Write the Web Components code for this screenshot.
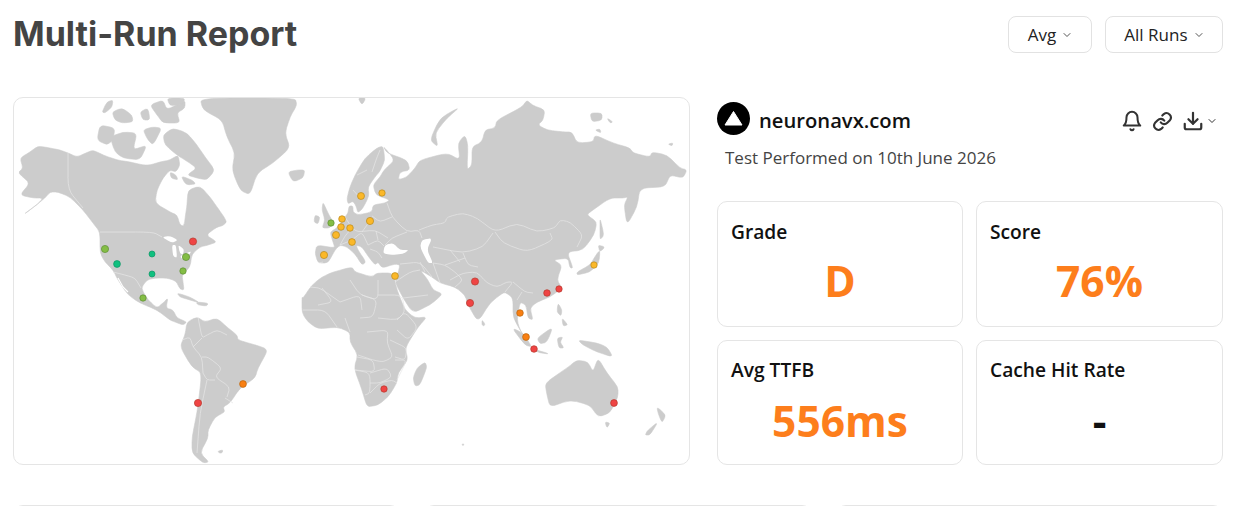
<!DOCTYPE html>
<html>
<head>
<meta charset="utf-8">
<title>Multi-Run Report</title>
<style>
html, body { margin: 0; height: 506px; overflow: hidden; background: #fff; }
body { font-family: "Open Sans", "Noto Sans", "Liberation Sans", sans-serif; color: #111; }
</style>
</head>
<body>
<report-page></report-page>
<script>
const chevron = `<svg width="10" height="10" viewBox="0 0 10 10" fill="none" stroke="currentColor" stroke-width="1" stroke-linecap="round" stroke-linejoin="round"><path d="M2 3.5 5 6.5 8 3.5"/></svg>`;

customElements.define('report-select', class ReportSelect extends HTMLElement {
  constructor() {
    super();
    this.attachShadow({ mode: 'open' });
    this.shadowRoot.innerHTML = `
<style>
:host {
  display: inline-flex;
  align-items: center;
  justify-content: center;
  gap: 6px;
  height: 35px;
  padding: 0 18.5px;
  border: 1px solid #e2e2e2;
  border-radius: 8px;
  font-size: 17px;
  color: #222;
}
svg { display: block; color: #555; }
</style>
<slot></slot>${chevron}`;
  }
});

customElements.define('report-header', class ReportHeader extends HTMLElement {
  constructor() {
    super();
    this.attachShadow({ mode: 'open' });
    this.shadowRoot.innerHTML = `
<style>
:host {
  display: flex;
  align-items: flex-start;
  justify-content: space-between;
  height: 81px;
  padding: 16px 12px 0 13px;
}
h1 {
  margin: 0;
  font: 700 34px/36px Inter, Roboto, sans-serif;
  color: #444;
}
.actions { display: flex; gap: 13px; }
</style>
<h1><slot name="title"></slot></h1>
<div class="actions"><slot></slot></div>`;
  }
});

// land outlines, traced in page coordinates of the reference
const LAND = [
  // north america
  '20,158 30,152 38,146 50,148 60,150 68,153 77,157 86,153 93,150 103,155 117,160 130,162 143,165 150,165 160,162 170,160 178,155 180,165 176,172 170,170 163,178 157,190 155,203 170,212 177,215 180,225 184,226 186,212 187,205 188,190 200,186 210,197 217,207 222,214 227,222 222,226 217,227 206,235 217,242 208,245 200,247 192,254 190,267 182,275 183,282 184,290 180,289 176,281 167,278 155,278 147,280 141,288 148,300 157,308 163,303 168,298 166,308 173,310 177,318 187,322 183,325 175,322 170,320 157,310 140,303 128,295 118,280 113,270 105,262 100,253 100,232 93,223 83,210 70,197 58,192 50,192 45,198 35,206 23,215 38,204 43,198 33,198 20,195 30,183 18,173 23,168',
  // greenland, iceland
  '200,98 295,98 297,105 290,117 285,133 290,148 273,163 257,173 250,195 240,190 232,170 235,153 227,137 222,120 203,110',
  '288,172 297,170 305,170 303,178 293,182',
  // arctic islands
  '163,135 173,128 187,133 197,145 205,157 215,170 207,180 197,178 187,175 197,168 185,160 177,155 165,145',
  '100,125 115,128 113,140 107,145 97,140',
  '110,137 123,132 137,133 133,150 147,145 140,160 123,158 115,152',
  '143,130 152,127 162,128 153,145 148,140',
  '150,105 163,100 167,110 185,100 185,108 177,113 180,123 163,123 157,115',
  '167,98 185,98 183,104 170,106',
  '112,112 122,108 132,115 133,122 122,123 115,120',
  '140,112 148,108 150,120 143,120',
  '102,112 107,102 113,100 112,107 105,113',
  '170,172 176,175 178,180 171,178',
  '181,176 192,180 196,184 186,185',
  // eurasia
  '383,146 387,153 407,160 410,170 400,172 398,180 407,177 415,168 420,160 447,153 460,160 458,143 465,135 468,145 467,170 472,165 472,147 482,142 485,130 495,128 497,120 522,107 527,100 532,105 545,110 543,120 538,125 547,130 563,132 572,132 577,143 593,142 595,135 613,143 630,148 633,153 650,157 652,152 667,155 680,168 687,170 683,178 670,175 665,187 640,188 637,207 627,225 624,205 628,197 623,198 610,198 590,212 587,215 597,222 594,235 583,250 567,252 573,268 570,268 568,258 553,260 562,265 557,280 562,288 550,297 537,302 530,308 533,320 528,318 526,305 520,302 517,320 520,330 528,342 525,338 513,318 513,298 505,292 500,295 490,303 478,322 468,305 465,295 455,287 440,283 432,277 420,270 428,280 433,290 443,294 430,305 413,313 403,298 395,282 398,273 400,265 395,264 382,268 378,262 375,265 368,256 362,247 356,245 358,250 366,262 362,265 355,254 347,247 340,245 335,250 328,263 318,263 315,253 317,245 335,248 333,242 330,232 337,228 345,217 348,213 349,206 353,206 353,212 358,215 372,212 373,205 385,203 390,200 376,195 373,185 380,177 384,170 395,160',
  // scandinavia
  '383,146 377,148 365,158 355,175 350,187 347,198 348,204 353,201 356,206 358,213 363,208 369,196 368,187 375,177 380,171 385,160',
  // africa
  '303,298 312,285 322,277 333,272 352,267 355,272 372,277 377,273 393,273 397,290 405,310 415,318 427,317 418,327 405,348 408,360 398,373 397,383 388,397 378,405 367,407 362,390 354,368 358,355 350,342 350,332 337,327 318,329 308,322 302,313 302,297',
  '425,362 427,367 420,385 415,386 413,378 417,368',
  // south america
  '187,322 197,317 205,322 217,318 228,328 237,335 238,340 252,344 265,348 267,352 258,368 255,378 240,388 230,403 223,407 225,412 215,417 208,430 208,438 200,453 209,462 203,463 192,453 192,437 197,413 202,373 192,367 180,347 185,335',
  '218,451 223,450 222,453 219,453',
  // caribbean
  '177,293 190,297 200,303 190,300 180,297',
  '196,302 208,303 207,306 198,305',
  // australasia
  '545,383 567,368 577,360 588,362 593,372 598,358 607,373 618,387 618,397 610,413 598,417 590,405 570,400 550,407 547,395',
  '605,422 610,423 607,428',
  '657,407 666,415 662,423 658,413',
  '658,422 650,435 645,435 648,430',
  '578,340 597,343 607,347 613,357 597,352 583,345',
  '537,338 553,327 547,342 540,344',
  '512,328 523,333 532,347 525,345',
  '530,348 550,354 540,353',
  '557,338 563,337 560,342 564,348 559,348',
  '558,303 562,310 561,316 557,312',
  '562,318 568,325 563,326',
  '482,320 485,324 484,326 482,325',
  // japan, sakhalin
  '600,250 599,263 590,272 577,275 577,272 590,265 596,255',
  '598,245 605,247 600,252',
  '600,218 604,235 600,240 600,228',
  // uk, ireland
  '323,202 328,213 333,222 330,228 322,228 325,220 322,210',
  '315,215 320,217 318,224 314,222',
  // arctic russia
  '460,107 440,118 430,140 438,147 435,133 447,118',
  '358,98 366,98 362,105',
  '590,113 602,113 602,120 592,122',
  '607,118 613,122 610,123',
  '595,130 600,129 601,133',
  '668,144 673,143 672,146',
  // specks
  '462,444 464,444 463,446'
];

// lakes and inland seas laid over the land
const WATER = [
  '162,237 170,236 178,240 172,243',
  '172,245 176,245 177,258 173,256',
  '178,245 184,249 183,255 180,253',
  '180,256 191,251 190,254 182,259',
  '385,245 393,243 400,250 409,250 403,254 390,255 383,253',
  '422,240 432,238 427,250 433,263 428,263 420,247'
];

const BORDERS = [
  '100,232 153,232 162,237', '68,153 68,190 83,208',
  '113,272 125,275 135,278 141,288',
  '198,317 202,338 207,335 217,330 227,335', '182,340 190,337 193,347 202,357 203,373', '193,347 202,338',
  '202,357 208,357 222,368 215,377 230,387 227,397', '203,373 207,380 215,380', '207,380 200,413 197,453', '225,398 233,403',
  '319,263 323,262',
  '310,287 320,288 340,302', '322,288 333,302 318,305', '340,302 360,295 362,310', '350,280 360,295 378,300 378,280',
  '362,295 377,300 373,317 360,318', '378,295 402,295 405,312 397,320 378,318', '397,320 405,312 418,327 408,340 397,330',
  '367,332 388,330 387,343 393,357 383,362 373,360 358,355', '390,340 407,348 405,360 395,357', '357,357 373,360 375,372 355,370',
  '355,370 370,373 370,393 365,395', '370,373 387,368 392,377 380,383 370,383', '370,393 380,383 392,380 397,383', '395,360 407,360 397,380',
  '303,310 325,310 337,327', '345,318 350,332',
  '419,230 432,225 445,223 447,217 463,213 477,218 495,232 517,223 537,232 555,228 560,220 570,222 583,235 577,247',
  '495,232 503,243 527,252 553,240 550,233',
  '387,203 392,217 407,232 419,230 422,238', '433,247 463,253 483,247 493,233', '463,253 468,265 478,267',
  '450,280 463,273 477,272 487,283 497,287 507,282 513,282 505,292', '513,282 525,292 533,293', '517,300 522,292',
  '392,217 380,222 372,216', '407,232 392,238 385,245', '340,245 352,240 362,232 368,245', '345,217 352,228 358,232 375,230 388,238', '362,232 372,218',
  '352,228 345,236 340,245', '368,245 378,240 384,246', '376,231 378,240', '370,249 378,252 382,258',
  '400,264 420,262 432,277', '420,262 425,272', '433,263 445,265 455,272 463,280 455,287', '433,263 440,283', '445,265 465,258', '450,250 460,262',
  '395,282 410,272 420,270', '403,298 428,295',
  '357,175 367,170', '353,190 362,200', '372,172 376,160 380,150'
];

// [x, y, radius, colour]
const PINS = [
  [105, 249, 3.6, 'g'], [117, 264, 3.4, 't'], [152, 254, 3, 't'], [152, 274, 3, 't'],
  [186, 257, 3.6, 'g'], [183, 271, 3.2, 'g'], [143, 298, 3.2, 'g'], [193, 241.5, 3.6, 'r'],
  [198, 403, 3.6, 'r'], [243, 384, 3.4, 'o'], [331, 223, 3.2, 'g'], [342, 219, 3.3, 'y'],
  [341, 227, 3.3, 'y'], [350, 228, 3.3, 'y'], [336, 235, 3.5, 'y'], [352, 242, 3.4, 'y'],
  [324, 255, 3.6, 'y'], [370, 221, 3.6, 'y'], [361, 196, 3.5, 'y'], [382, 193, 3.2, 'y'],
  [395, 276, 3.4, 'y'], [594, 265, 3.2, 'y'], [475, 281.5, 3.6, 'r'], [470, 303, 3.6, 'r'],
  [547, 293, 3.3, 'r'], [559, 289, 3.2, 'r'], [520, 313, 3.3, 'o'], [526, 337, 3.4, 'o'],
  [534, 349, 3.3, 'r'], [384, 389, 3.2, 'r'], [614, 403, 3.4, 'r']
];
const PIN_COLOURS = {
  g: ['#84bd45', '#5f8f35'], t: ['#10c07f', '#0e9566'], r: ['#ef4444', '#b53a2c'],
  o: ['#f97f12', '#b9650f'], y: ['#fbb829', '#b98a1c']
};

// rounds the corners of a traced outline so the coast is not all straight cuts
function smooth(points, closed) {
  const pts = points.split(' ').map(p => p.split(',').map(Number));
  const n = pts.length;
  const at = (a, b, t) => [a[0] + (b[0] - a[0]) * t, a[1] + (b[1] - a[1]) * t].map(v => v.toFixed(1)).join(' ');
  let d = '';
  pts.forEach((p, i) => {
    const prev = pts[(i + n - 1) % n];
    const next = pts[(i + 1) % n];
    if (!closed && (i === 0 || i === n - 1)) {
      d += (i === 0 ? 'M' : 'L') + p.join(' ');
      return;
    }
    d += (d ? 'L' : 'M') + at(p, prev, .33) + 'Q' + p.join(' ') + ' ' + at(p, next, .33);
  });
  return d + (closed ? 'Z' : '');
}

customElements.define('world-map', class WorldMap extends HTMLElement {
  constructor() {
    super();
    this.attachShadow({ mode: 'open' });
    const land = LAND.map(p => `<path d="${smooth(p, true)}"/>`).join('');
    const water = WATER.map(p => `<path d="${smooth(p, true)}"/>`).join('');
    const borders = BORDERS.map(p => `<path d="${smooth(p, false)}"/>`).join('');
    const pins = PINS.map(([x, y, r, c]) =>
      `<circle cx="${x}" cy="${y}" r="${r}" fill="${PIN_COLOURS[c][0]}" stroke="${PIN_COLOURS[c][1]}" stroke-width=".7"/>`).join('');
    this.shadowRoot.innerHTML = `
<style>
:host {
  display: block;
  width: 677px;
  height: 368px;
  box-sizing: border-box;
  border: 1px solid #e5e5e5;
  border-radius: 10px;
  overflow: hidden;
}
svg { display: block; width: 675px; height: 366px; }
</style>
<svg viewBox="14 98 675 366">
  <g fill="#cccccc" stroke="#cccccc" stroke-width=".6" stroke-linejoin="round">${land}</g>
  <g fill="#fff">${water}</g>
  <path d="M118 278 123 287 128 292" fill="none" stroke="#fff" stroke-width="1.2"/>
  <g fill="none" stroke="#e6e6e6" stroke-width=".7" stroke-linejoin="round">${borders}</g>
  ${pins}
</svg>`;
  }
});

customElements.define('site-heading', class SiteHeading extends HTMLElement {
  constructor() {
    super();
    this.attachShadow({ mode: 'open' });
    this.shadowRoot.innerHTML = `
<style>
:host { display: block; height: 104px; }
.top { display: flex; align-items: center; height: 33px; padding-top: 5px; }
.logo { width: 33px; height: 33px; margin-right: 9px; flex: none; }
.name { font-size: 20.2px; font-weight: 600; color: #111; flex: 1; margin-top: 3px; }
.icons { display: flex; align-items: center; gap: 9px; color: #333; padding-right: 6px; margin-top: 5px; }
.icons svg { display: block; }
.dl { display: flex; align-items: center; gap: 3px; }
.sub { margin: 12px 0 0 8px; font-size: 17px; line-height: 22px; color: #444; }
</style>
<div class="top">
  <svg class="logo" viewBox="0 0 33 33"><circle cx="16.5" cy="16.5" r="16.5" fill="#000"/><path d="M16.5 9.5 25 23H8z" fill="#fff" stroke="#fff" stroke-linejoin="round"/></svg>
  <span class="name"><slot name="name"></slot></span>
  <div class="icons">
    <svg width="22" height="22" viewBox="0 0 24 24" fill="none" stroke="currentColor" stroke-width="2.2" stroke-linecap="round" stroke-linejoin="round"><path d="M6 8a6 6 0 0 1 12 0c0 7 3 9 3 9H3s3-2 3-9"/><path d="M10.3 21a1.9 1.9 0 0 0 3.4 0"/></svg>
    <svg width="21" height="21" viewBox="0 0 24 24" fill="none" stroke="currentColor" stroke-width="2.4" stroke-linecap="round" stroke-linejoin="round"><path d="M10 13a5 5 0 0 0 7.5.5l3-3a5 5 0 0 0-7-7l-1.7 1.7"/><path d="M14 11a5 5 0 0 0-7.5-.5l-3 3a5 5 0 0 0 7 7l1.7-1.7"/></svg>
    <span class="dl">
      <svg width="22" height="22" viewBox="0 0 24 24" fill="none" stroke="currentColor" stroke-width="2.4" stroke-linecap="round" stroke-linejoin="round"><path d="M3 15v4a2 2 0 0 0 2 2h14a2 2 0 0 0 2-2v-4"/><path d="M7 10l5 5 5-5"/><path d="M12 15V3"/></svg>
      ${chevron}
    </span>
  </div>
</div>
<p class="sub"><slot></slot></p>`;
  }
});

customElements.define('metric-card', class MetricCard extends HTMLElement {
  static get observedAttributes() { return ['label', 'value', 'tone']; }
  constructor() {
    super();
    this.attachShadow({ mode: 'open' });
    this.shadowRoot.innerHTML = `
<style>
:host {
  display: block;
  box-sizing: border-box;
  border: 1px solid #e5e5e5;
  border-radius: 10px;
  padding: 18px 13px 0;
  min-width: 0;
}
.label { font-size: 19.2px; line-height: 24px; font-weight: 600; color: #111; }
.value { margin-top: 10px; text-align: center; font-size: 42.5px; line-height: 54px; font-weight: 700; color: #111; }
:host([tone="warn"]) .value { color: #fd7e1c; }
:host([low]) { padding-top: 17px; }
:host([low]) .value { margin-top: 12px; }
</style>
<div class="label"></div>
<div class="value"></div>`;
  }
  attributeChangedCallback(name, old, value) {
    if (name === 'label') this.shadowRoot.querySelector('.label').textContent = value;
    if (name === 'value') this.shadowRoot.querySelector('.value').textContent = value;
  }
});

customElements.define('report-page', class ReportPage extends HTMLElement {
  constructor() {
    super();
    this.attachShadow({ mode: 'open' });
    this.shadowRoot.innerHTML = `
<style>
:host { display: block; height: 506px; overflow: hidden; }
.main { display: grid; grid-template-columns: 677px 506px; gap: 27px; padding: 0 0 0 13px; }
.metrics { display: grid; grid-template-columns: 246px 247px; grid-template-rows: 126px 125px; gap: 13px; }
.lower { display: grid; grid-template-columns: repeat(3, 1fr); gap: 24px; margin-top: 40px; padding: 0 12px 0 13px; }
.lower div { height: 120px; border: 1px solid #e5e5e5; border-radius: 10px; }
</style>
<report-header>
  <span slot="title">Multi-Run Report</span>
  <report-select>Avg</report-select>
  <report-select>All Runs</report-select>
</report-header>
<div class="main">
  <world-map></world-map>
  <div>
    <site-heading><span slot="name">neuronavx.com</span>Test Performed on 10th June 2026</site-heading>
    <div class="metrics">
      <metric-card label="Grade" value="D" tone="warn"></metric-card>
      <metric-card label="Score" value="76%" tone="warn"></metric-card>
      <metric-card label="Avg TTFB" value="556ms" tone="warn" low></metric-card>
      <metric-card label="Cache Hit Rate" value="-" low></metric-card>
    </div>
  </div>
</div>
<div class="lower"><div></div><div></div><div></div></div>`;
  }
});
</script>
</body>
</html>
